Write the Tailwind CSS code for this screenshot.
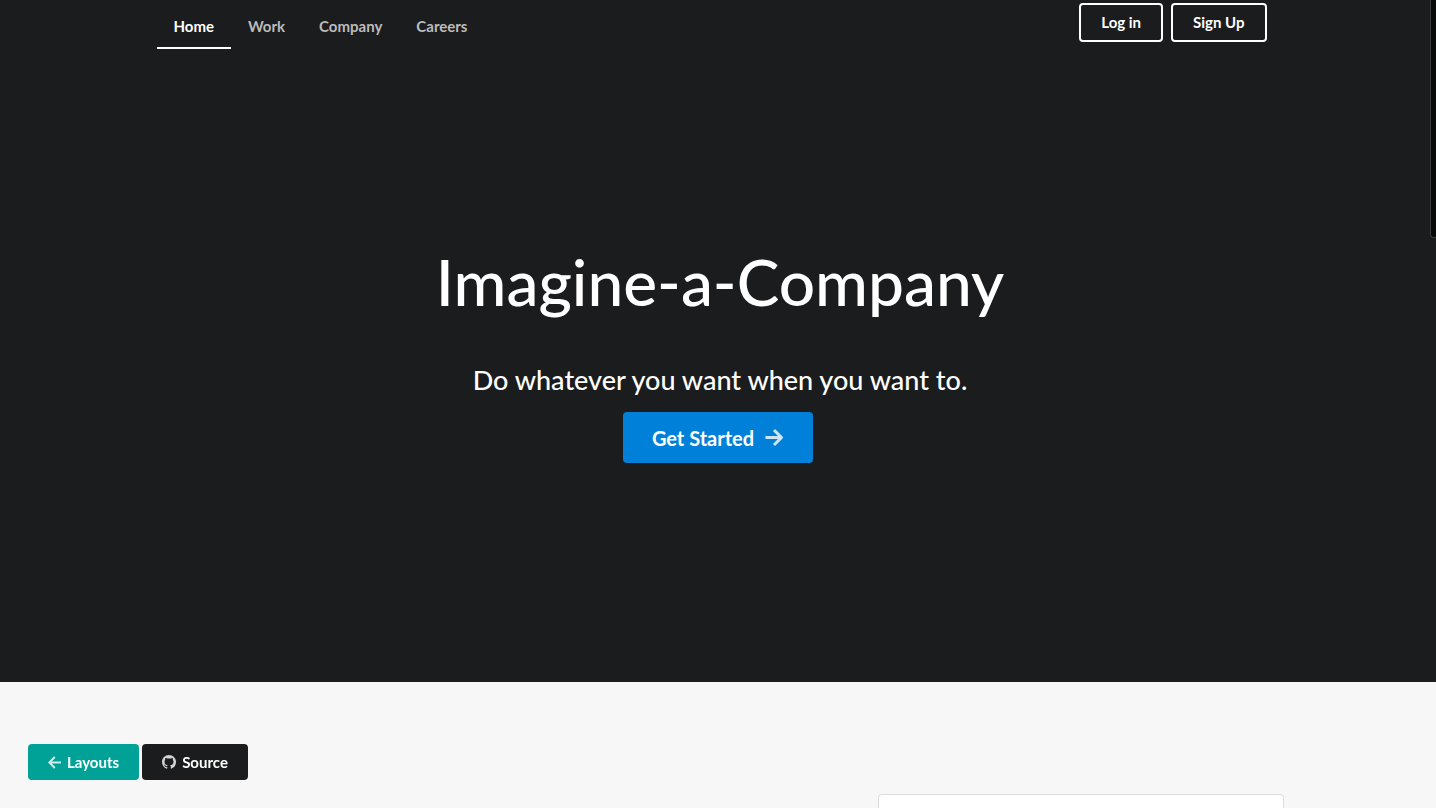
<!DOCTYPE html>
<html lang="en">
<head>
<meta charset="utf-8">
<title>Imagine-a-Company</title>
<script src="https://cdn.jsdelivr.net/npm/@tailwindcss/browser@4"></script>
</head>
<body class="relative flex min-h-screen flex-col bg-[#f7f7f7] font-['Lato',sans-serif]">
<header class="flex min-h-[682px] flex-col bg-[#1b1c1d] pl-1 text-white">
  <div class="mx-auto flex w-full max-w-[1127px] items-start justify-between pr-[17px]">
    <nav class="flex pt-1 text-[15px] font-bold leading-5">
      <a href="#" class="border-b-2 border-white px-[17px] pt-3 pb-[11px]">Home</a>
      <a href="#" class="px-[17px] pt-3 text-[#bbbbbb]">Work</a>
      <a href="#" class="px-[17px] pt-3 text-[#bbbbbb]">Company</a>
      <a href="#" class="px-[17px] pt-3 text-[#bbbbbb]">Careers</a>
    </nav>
    <div class="flex gap-2 pt-[3px] text-[15px] font-bold leading-5">
      <button class="h-[39px] rounded border-2 border-white px-5 pb-0.5">Log in</button>
      <button class="h-[39px] rounded border-2 border-white px-5 pb-0.5">Sign Up</button>
    </div>
  </div>
  <div class="flex flex-col items-center pt-[193px]">
    <h1 class="text-[64px] font-medium leading-20">Imagine-a-Company</h1>
    <h2 class="pt-[38px] text-[27px] font-medium leading-10">Do whatever you want when you want to.</h2>
    <button class="mt-3 mr-1 flex h-[51px] items-center gap-[11px] rounded bg-[#0080d8] px-[29px] text-xl font-bold">
      Get Started
      <svg class="w-[19px]" viewBox="0 0 19 19" fill="none" stroke="#cce6f7" stroke-width="3" stroke-linejoin="round"><path d="M.5 9.500H16M9 2l7.500 7.500L9 17"/></svg>
    </button>
  </div>
</header>
<main class="flex flex-1 flex-col pl-1 pt-28">
  <div class="mx-auto flex w-full max-w-[1127px] flex-1 justify-end">
    <div class="w-[406px] rounded-t border border-b-0 border-[#dcdcdc] bg-white"></div>
  </div>
</main>
<div class="fixed bottom-7 left-7 flex gap-[3px] text-[15px] font-bold text-white">
  <a href="#" class="flex h-9 items-center gap-1.5 rounded bg-[#00a298] px-5">
    <svg class="w-[13px]" viewBox="0 0 13 13" fill="none" stroke="#cceceb" stroke-width="1.9"><path d="M13 6.500H2M6.800 1L1.300 6.500l5.500 5.500"/></svg>
    Layouts
  </a>
  <a href="#" class="flex h-9 items-center gap-1.5 rounded bg-[#1b1c1d] px-5">
    <svg class="w-[14px]" viewBox="0 0 16 16" fill="#d1d2d2"><path d="M8 0C3.580 0 0 3.580 0 8c0 3.540 2.290 6.530 5.470 7.590.4.070.55-.17.55-.38 0-.19-.01-.82-.01-1.490-2.010.37-2.530-.49-2.690-.94-.09-.23-.48-.94-.82-1.130-.28-.15-.68-.52-.01-.53.63-.01 1.080.58 1.230.82.72 1.210 1.870.87 2.330.66.07-.52.28-.87.51-1.070-1.780-.2-3.640-.89-3.640-3.950 0-.87.31-1.590.82-2.150-.08-.2-.36-1.020.08-2.120 0 0 .67-.21 2.200.82.64-.18 1.320-.27 2-.27s1.360.09 2 .27c1.530-1.040 2.200-.82 2.200-.82.44 1.100.16 1.920.08 2.120.51.56.82 1.270.82 2.150 0 3.070-1.870 3.750-3.650 3.950.29.25.54.73.54 1.480 0 1.070-.01 1.930-.01 2.200 0 .21.15.46.55.38A8.010 8.010 0 0 0 16 8c0-4.420-3.580-8-8-8z"/></svg>
    Source
  </a>
</div>
<!-- Scrollbar thumb over the page edge -->
<div class="absolute top-0 right-0 h-[238px] w-1.5 rounded-bl border-b border-l border-[#3c3d3e] bg-[#080909]"></div>
</body>
</html>
